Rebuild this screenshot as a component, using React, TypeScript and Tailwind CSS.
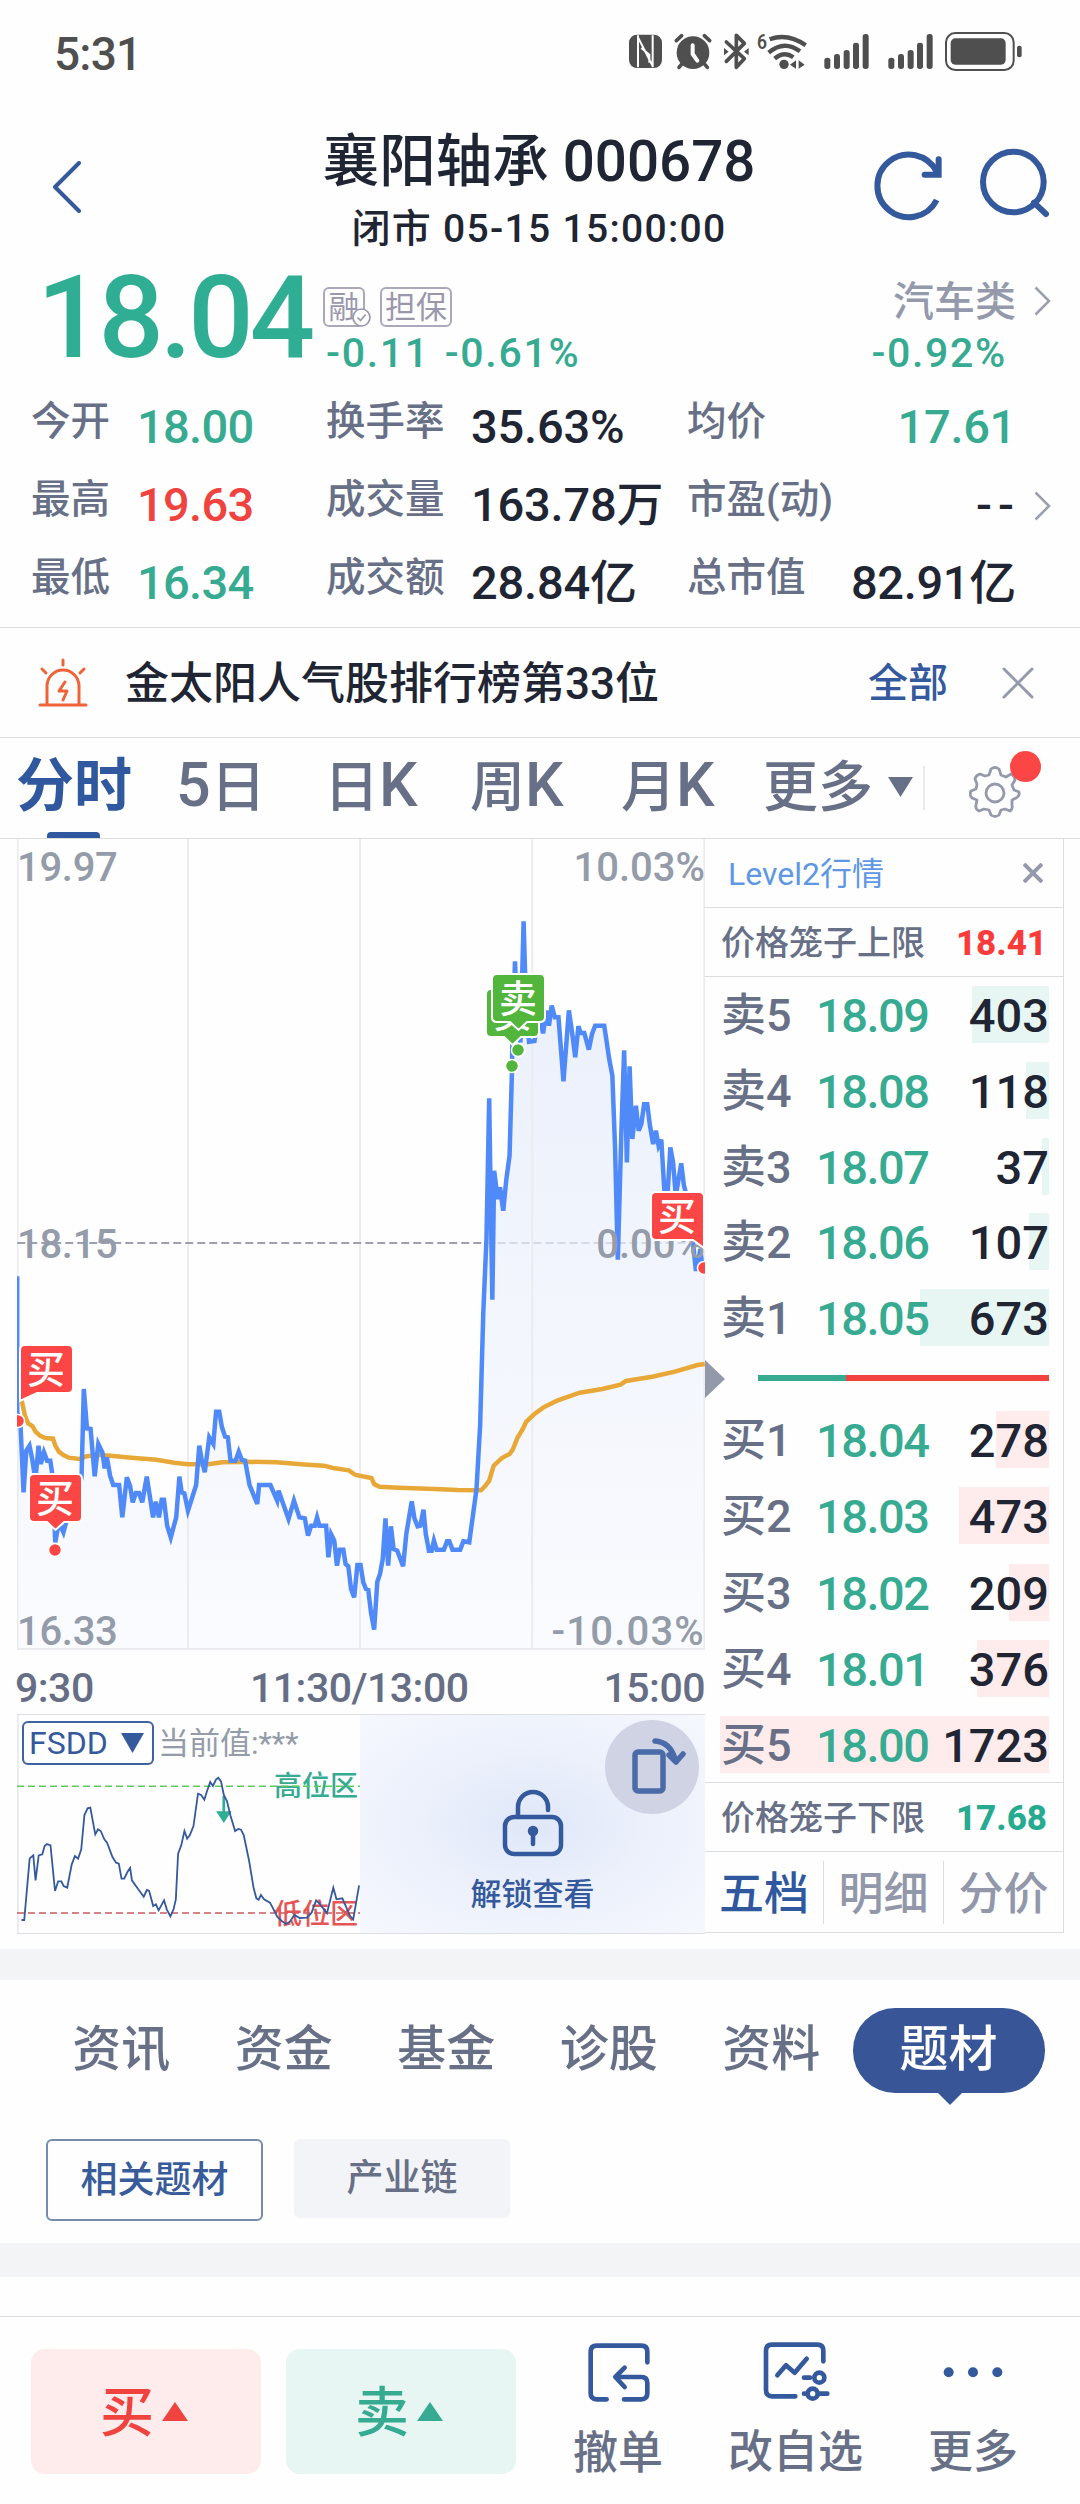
import { ReactNode } from 'react';
import clsx from 'clsx';

interface Level {
  label: string;
  price: string;
  volume: string;
  bar: number;
}

interface MarkerProps {
  kind: 'buy' | 'sell';
  x: number;
  y: number;
  tip: string;
}

const SELLS: Level[] = [
  { label: '卖5', price: '18.09', volume: '403', bar: 77 },
  { label: '卖4', price: '18.08', volume: '118', bar: 23 },
  { label: '卖3', price: '18.07', volume: '37', bar: 7 },
  { label: '卖2', price: '18.06', volume: '107', bar: 20 },
  { label: '卖1', price: '18.05', volume: '673', bar: 129 },
];

const BUYS: Level[] = [
  { label: '买1', price: '18.04', volume: '278', bar: 53 },
  { label: '买2', price: '18.03', volume: '473', bar: 90 },
  { label: '买3', price: '18.02', volume: '209', bar: 40 },
  { label: '买4', price: '18.01', volume: '376', bar: 72 },
  { label: '买5', price: '18.00', volume: '1723', bar: 329 },
];

const STATS = [
  [
    { label: '今开', value: '18.00', color: 'text-[#36ab92]' },
    { label: '换手率', value: '35.63%', color: 'text-[#1f2533]' },
    { label: '均价', value: '17.61', color: 'text-[#36ab92]' },
  ],
  [
    { label: '最高', value: '19.63', color: 'text-[#f04340]' },
    { label: '成交量', value: '163.78万', color: 'text-[#1f2533]' },
    { label: '市盈(动)', value: '--', color: 'text-[#1f2533] -mr-1 tracking-[6px]' },
  ],
  [
    { label: '最低', value: '16.34', color: 'text-[#36ab92]' },
    { label: '成交额', value: '28.84亿', color: 'text-[#1f2533]' },
    { label: '总市值', value: '82.91亿', color: 'text-[#1f2533]' },
  ],
];

const SECTIONS = ['资讯', '资金', '基金', '诊股', '资料'];

// Intraday series in chart units (1519 x 2430, origin 37.5 / 30)
const PRICE_LINE =
  '38,1342 38,1750 45,1780 52,1990 58,1865 65,1850 71,1890 75,1925 80,1925 85,1850 90,1905 97,1870 104,1895 111,1895 116,1940 122,2140 130,2080 140,2110 150,2060 165,2040 180,1945 185,1680 192,1798 200,1800 209,1942 217,1845 226,1870 231,1918 236,1885 243,1940 250,1968 263,1968 270,2065 280,1945 287,1970 293,2020 300,1992 307,1992 314,2020 324,1943 338,2065 344,2018 351,2065 357,2012 362,2012 369,2090 377,2125 389,2065 396,1943 401,1990 407,1993 415,2045 433,1968 440,1850 445,1890 452,1930 462,1825 471,1845 477,1748 484,1748 490,1795 497,1823 503,1825 509,1895 520,1895 527,1868 534,1893 541,1895 551,1968 568,2025 572,1968 597,1968 612,2015 615,1985 637,2070 649,2015 661,2065 673,2068 680,2120 687,2090 695,2090 700,2065 705,2090 720,2090 725,2185 731,2116 738,2135 744,2210 750,2162 758,2162 763,2205 769,2212 775,2280 782,2305 789,2208 796,2208 802,2260 808,2280 813,2282 819,2350 826,2402 833,2258 839,2235 845,2190 851,2068 857,2210 863,2092 869,2160 877,2165 890,2212 897,2115 909,2017 915,2068 922,2092 928,2090 935,2042 940,2115 947,2165 953,2165 958,2135 964,2162 980,2162 987,2137 992,2137 999,2162 1016,2162 1023,2137 1036,2140 1042,2080 1052,1980 1060,1790 1067,1450 1074,1230 1080,808 1083,1080 1087,1412 1091,1025 1099,1110 1104,1075 1111,1145 1118,1050 1125,980 1130,740 1131,650 1137,397 1143,600 1149,640 1156,277 1162,560 1168,638 1180,636 1190,560 1199,613 1206,545 1212,590 1218,530 1225,565 1233,565 1244,757 1256,544 1264,620 1270,685 1277,592 1282,612 1290,612 1300,662 1307,615 1314,590 1334,590 1339,635 1345,690 1352,740 1358,960 1364,1292 1372,900 1378,664 1384,1000 1390,712 1396,930 1404,830 1410,905 1416,885 1422,826 1429,826 1435,890 1442,945 1448,905 1454,950 1460,932 1467,1090 1474,1090 1480,955 1486,1000 1492,1100 1504,1003 1510,1070 1520,1120 1530,1240 1536,1320 1540,1320 1546,1260 1551,1317';

const AVERAGE_LINE =
  '40,1680 48,1715 55,1760 62,1783 72,1792 78,1807 88,1820 100,1827 117,1829 122,1850 130,1868 140,1878 152,1886 175,1890 190,1882 215,1877 250,1881 290,1886 345,1892 385,1901 415,1906 460,1906 490,1900 540,1898 610,1900 680,1907 715,1910 735,1917 770,1924 785,1938 820,1947 826,1965 838,1973 880,1976 960,1980 1010,1983 1062,1984 1072,1970 1080,1955 1090,1910 1108,1887 1125,1875 1132,1862 1143,1825 1153,1803 1162,1778 1180,1755 1200,1735 1230,1715 1280,1691 1330,1680 1370,1667 1382,1656 1440,1643 1490,1628 1540,1608 1556,1605';

const FSDD_LINE =
  '47,687 53,687 65,502 73,493 78,568 85,493 93,490 98,465 103,459 111,463 121,600 128,571 135,571 140,585 148,590 158,520 165,495 172,503 179,475 186,372 193,352 199,350 210,430 216,415 222,420 230,445 236,455 248,498 256,515 262,518 268,563 274,563 281,543 287,531 291,568 305,595 317,617 324,597 329,600 338,645 344,640 350,658 362,628 368,655 376,676 383,655 388,625 393,488 400,463 407,420 413,443 419,432 427,405 437,308 444,312 451,326 457,300 464,273 470,285 477,265 482,260 488,272 494,312 501,330 509,375 519,420 526,414 532,416 538,432 550,510 560,592 566,622 571,626 576,612 583,625 596,635 602,650 612,677 622,690 632,699 640,692 650,672 662,681 678,680 688,665 698,628 705,637 722,667 736,590 743,625 756,622 765,650 773,675 780,685 793,583';

function StatusBar() {
  return (
    <div className="flex h-[104px] items-start justify-between pl-[54px] pr-[50px] text-[#4f4f4f]">
      <span className="pt-[31px] text-[46px] leading-none tracking-[-0.8px]">5:31</span>
      <svg className="mt-[30px] h-[43px] w-[410px]" viewBox="0 30 1230 129" fill="#4f4f4f">
        {/* NFC */}
        <rect x="27" y="44" width="99" height="100" rx="24" />
        <path d="M54 46v96M54 52l44 86M98 46v96M64 84l24 20v24" fill="none" stroke="#fff" strokeWidth="6" />
        {/* Alarm */}
        <circle cx="219" cy="98" r="49" />
        <path d="M169 62l16-15M269 62l-16-15M187 130l-10 12M252 130l10 12" stroke="#4f4f4f" strokeWidth="11" strokeLinecap="round" />
        <path d="M218 76v26l14 20" fill="none" stroke="#fff" strokeWidth="12" strokeLinecap="round" />
        {/* Bluetooth */}
        <path d="M319 66l54 50-24 26V46l24 24-54 54" fill="none" stroke="#4f4f4f" strokeWidth="11" strokeLinejoin="round" strokeLinecap="round" />
        <path d="M312 84v22l14-11zM386 84v22l-14-11z" />
        {/* Wi-Fi 6 */}
        <text x="411" y="86" fontSize="62" fontWeight="600" textLength="30" lengthAdjust="spacingAndGlyphs">6</text>
        <g fill="none" stroke="#4f4f4f" strokeWidth="13">
          <path d="M449 58q54-20 108 18" />
          <path d="M446 98q46-40 94-4" />
          <path d="M464 116q28-24 56-4" />
        </g>
        <circle cx="492" cy="133" r="14" />
        <path d="M528 121v25l-18-12zM536 121v25l18-12z" />
        {/* Signals */}
        {[613, 805].map((x) => (
          <g key={x}>
            <rect x={x} y="113" width="18" height="34" rx="8" />
            <rect x={x + 29} y="102" width="18" height="45" rx="8" />
            <rect x={x + 58} y="90" width="18" height="57" rx="8" />
            <rect x={x + 86} y="68" width="18" height="79" rx="8" />
            <rect x={x + 115} y="42" width="18" height="105" rx="8" />
          </g>
        ))}
        {/* Battery */}
        <rect x="978" y="39" width="203" height="111" rx="28" fill="none" stroke="#4f4f4f" strokeWidth="6" />
        <rect x="992" y="55" width="165" height="79" rx="14" />
        <rect x="1191" y="77" width="14" height="35" rx="6" />
      </svg>
    </div>
  );
}

function Header() {
  return (
    <header className="flex h-[156px] items-start justify-between pl-[53px] pr-[30px]">
      <svg className="mt-[57px] h-[52px] w-7" viewBox="0 0 28 52" fill="none" stroke="#34599d" strokeWidth="4" strokeLinecap="round" strokeLinejoin="round">
        <path d="M26 2L2 26l24 24" />
      </svg>
      <div className="ml-[127px] flex flex-col items-center text-[#1f2533]">
        <h1 className="mt-[30px] whitespace-pre text-[56.500px] leading-none">襄阳轴承 000678</h1>
        <p className="mt-[19px] text-[39px] leading-none tracking-[1.3px]">闭市 05-15 15:00:00</p>
      </div>
      <svg className="mt-[42px] h-[80px] w-[180px]" viewBox="750 378 540 240" fill="none" stroke="#34599d" strokeWidth="18">
        <path d="M950 540A94 94 0 1 1 950 455" />
        <path d="M956 418v46h-42" strokeLinecap="round" />
        <circle cx="1180" cy="486" r="91" />
        <path d="M1242 548l36 34" strokeLinecap="round" />
      </svg>
    </header>
  );
}

function Chevron({ className }: { className?: string }) {
  return (
    <svg className={clsx('h-[30px] w-[17px]', className)} viewBox="0 0 17 30" fill="none" stroke="#9a9fae" strokeWidth="2.5">
      <path d="M1.5 1.5L15 15 1.5 28.5" />
    </svg>
  );
}

function Quote() {
  return (
    <section className="h-[367px] text-[#36ab92]">
      <div className="flex h-[123px] items-start pl-[37px] pr-[29px]">
        <span className="w-[286px] text-[115px] leading-none tracking-[-3.8px] text-[#2fae94]">18.04</span>
        <div className="pt-[27px]">
          <div className="flex gap-[15px] text-[31px] font-normal text-[#9a97ad]">
            <span className="relative flex h-10 w-[42px] items-center justify-center rounded-md border-2 border-[#aaa8ba] leading-none">
              融
              <svg className="absolute -bottom-0.5 -right-2 size-[19px]" viewBox="0 0 19 19" fill="#fff" stroke="#9a97ad" strokeWidth="1.7">
                <circle cx="9.5" cy="9.5" r="8.5" />
                <path d="M5.500 9.500l3 3 5-6" fill="none" />
              </svg>
            </span>
            <span className="flex h-10 w-[72px] items-center justify-center rounded-md border-2 border-[#aaa8ba] leading-none">担保</span>
          </div>
          <div className="ml-[3px] mt-1.5 flex gap-[15px] text-[41px] leading-none tracking-[1.7px]">
            <span>-0.11</span>
            <span>-0.61%</span>
          </div>
        </div>
        <div className="ml-auto flex flex-col items-end pt-[22px]">
          <div className="flex items-center gap-[18px] text-[41px] leading-none text-[#949aab]">
            汽车类
            <Chevron className="-mt-1" />
          </div>
          <span className="mr-[44px] mt-[10px] text-[41px] leading-none tracking-[1.7px]">-0.92%</span>
        </div>
      </div>
      {STATS.map(([a, b, c], row) => (
        <div key={a.label} className="flex h-[78px] items-center pl-[31px] pr-[29px] text-[39.500px] leading-none text-[#677086]">
          <span className="w-[106px]">{a.label}</span>
          <span className={clsx('w-[189px] pt-2 text-[47px] tracking-[-0.7px]', a.color)}>{a.value}</span>
          <span className="w-[145px]">{b.label}</span>
          <span className={clsx('w-[216px] whitespace-nowrap pt-2 text-[47px] tracking-[-0.2px]', b.color)}>{b.value}</span>
          <span>{c.label}</span>
          <span className={clsx('ml-auto pt-2 text-[47px]', c.color, c.value !== '--' && 'tracking-[-0.3px]')}>{c.value}</span>
          <span className="ml-[18px] w-[17px] pt-3">{row === 1 && <Chevron />}</span>
        </div>
      ))}
    </section>
  );
}

function Notice() {
  return (
    <section className="flex h-[111px] items-center border-y border-[#dcdddf] pl-[38px] pr-[46px]">
      <svg className="h-[50px] w-[50px]" viewBox="0 0 50 50" fill="none" stroke="#f06238" strokeWidth="3" strokeLinecap="round" strokeLinejoin="round">
        <path d="M2 47h46M9 46V28a16 16 0 0 1 32 0v18M25 2v5M4 11l4 4M46 11l-4 4" />
        <path d="M27 24l-6 9h8l-4 9" />
      </svg>
      <span className="ml-[37px] pt-[3px] text-[44px] leading-none text-[#1f2533]">金太阳人气股排行榜第33位</span>
      <span className="ml-auto pt-[3px] text-[40px] leading-none text-[#34599d]">全部</span>
      <svg className="ml-[54px] size-8" viewBox="0 0 32 32" stroke="#949aab" strokeWidth="3" strokeLinecap="round">
        <path d="M2 2l28 28M30 2L2 30" />
      </svg>
    </section>
  );
}

function PeriodTabs() {
  return (
    <nav className="flex h-[101px] items-start border-b border-[#dcdddf] pl-4 text-[55px] leading-none text-[#677086]">
      <div className="flex h-full w-[160px] flex-col justify-between pt-[19px] text-[58px] font-bold text-[#2f589e]">
        分时
        <span className="ml-[31px] h-1.5 w-[53px] rounded-t bg-[#2f589e]" />
      </div>
      <span className="w-[148px] pt-[17px]">
        <span className="text-[61px]">5</span>日
      </span>
      <span className="w-[146px] pt-[17px]">
        日<span className="text-[61px]">K</span>
      </span>
      <span className="w-[151px] pt-[17px]">
        周<span className="text-[61px]">K</span>
      </span>
      <span className="w-[142px] pt-[17px]">
        月<span className="text-[61px]">K</span>
      </span>
      <span className="w-[125px] pt-[22px]">更多</span>
      <svg className="mt-[39px] h-5 w-[25px]" viewBox="0 0 25 20" fill="#677086">
        <path d="M0 0h25L12.500 20z" />
      </svg>
      <span className="ml-[10px] mt-7 h-[44px] w-0.5 bg-[#e8e9eb]" />
      <div className="relative ml-11 mt-7">
        <svg className="h-[52px] w-[52px]" viewBox="0 0 52 52" fill="none" stroke="#949aab" strokeWidth="2.8" strokeLinejoin="round">
          <path d="M22 3Q26 0 30 3L32 9L37 11L42 8Q46 10 46 14L43 19L45 24L50 26Q51 30 47 32L43 34L43 39Q44 43 41 45L36 43L32 44L30 49Q26 52 22 49L20 44L15 43L10 45Q6 43 7 39L8 34L3 32Q0 29 2 25L7 23L8 18L6 13Q7 9 11 8L16 10L20 9Z" />
          <circle cx="26" cy="27" r="9" />
        </svg>
        <span className="absolute -top-[15px] left-[41px] size-[31px] rounded-full bg-[#fc4645]" />
      </div>
    </nav>
  );
}

// Flag pinned on the price line; x / y is the top left corner of its box
function Marker({ kind, x, y, tip }: MarkerProps) {
  return (
    <g transform={`translate(${x} ${y})`}>
      <path
        d={`M5 0H48Q53 0 53 5V${tip === 'right' ? '56L42 48' : '43Q53 48 48 48'}${tip === 'center' ? 'H35L26.500 56L18 48' : ''}H${tip === 'left' ? '17L0 56V43' : '5Q0 48 0 43'}V5Q0 0 5 0Z`}
        fill={kind === 'buy' ? '#fc4645' : '#52b53c'}
        stroke="#fff"
        strokeWidth="2"
      />
      <text x="26" y="38" fontSize="38" fill="#fff" textAnchor="middle">
        {kind === 'buy' ? '买' : '卖'}
      </text>
    </g>
  );
}

function PriceChart() {
  return (
    <div className="relative h-[811px] text-[40px] leading-none text-[#949ba9]">
      <svg className="block h-full w-full" viewBox="37.500 30 1519 2433" preserveAspectRatio="none" fill="none">
        <defs>
          <linearGradient id="area" x1="0" y1="0" x2="0" y2="1">
            <stop offset="0" stopColor="#e9effb" />
            <stop offset="1" stopColor="#fafbfe" />
          </linearGradient>
        </defs>
        <polygon points={`${PRICE_LINE} 1556,1317 1556,2460 38,2460`} fill="url(#area)" />
        <g stroke="#ebecef" strokeWidth="2">
          <path d="M39 30V2460H1555V30M415 30V2460M795 30V2460M1175 30V2460" vectorEffect="non-scaling-stroke" />
        </g>
        <path d="M38 1242H1072" stroke="#9ba1ae" strokeWidth="2" strokeDasharray="8 4" vectorEffect="non-scaling-stroke" />
        <path d="M1072 1242H1555" stroke="#d3d9e6" strokeWidth="2" strokeDasharray="8 4" vectorEffect="non-scaling-stroke" />
        <polyline points={AVERAGE_LINE} stroke="#e8a838" strokeWidth="4.500" vectorEffect="non-scaling-stroke" />
        <polyline points={PRICE_LINE} stroke="#4f8af8" strokeWidth="4.500" vectorEffect="non-scaling-stroke" />
      </svg>
      <span className="absolute left-0 top-[9px] tracking-[-0.3px]">19.97</span>
      <span className="absolute right-0 top-[9px]">10.03%</span>
      <span className="absolute left-0 top-[386px] tracking-[-0.3px]">18.15</span>
      <span className="absolute right-0 top-[386px]">0.00%</span>
      <span className="absolute -bottom-0.5 left-0 tracking-[-0.3px]">16.33</span>
      <span className="absolute -bottom-0.5 right-0 tracking-[1.2px]">-10.03%</span>
      <svg className="absolute inset-0 h-full w-full" viewBox="17 840 688 811">
        <Marker kind="sell" x={486} y={990} tip="center" />
        <Marker kind="sell" x={492} y={975} tip="center" />
        <Marker kind="buy" x={20} y={1346} tip="left" />
        <Marker kind="buy" x={29} y={1475} tip="center" />
        <Marker kind="buy" x={651} y={1193} tip="right" />
        <g stroke="#fff" strokeWidth="1.500">
          <circle cx="518" cy="1051" r="6.500" fill="#52b53c" />
          <circle cx="512" cy="1067" r="6.500" fill="#52b53c" />
          <circle cx="18" cy="1422" r="6.500" fill="#fc4645" />
          <circle cx="55" cy="1551" r="6.500" fill="#fc4645" />
          <circle cx="704" cy="1269" r="6.500" fill="#fc4645" />
        </g>
      </svg>
    </div>
  );
}

function FsddPanel() {
  return (
    <div className="flex h-[220px] border-y border-[#dcdee2]">
      <div className="relative w-[343px] border-l-2 border-[#ebecef]">
        <div className="flex items-center pl-[3px] pt-[6px]">
          <span className="flex h-11 w-[132px] items-center justify-between rounded-md border-2 border-[#3f62a3] pl-[5px] pr-2 text-[32px] font-normal leading-none text-[#34599d]">
            FSDD
            <svg className="h-5 w-[23px]" viewBox="0 0 23 20" fill="#34599d">
              <path d="M0 0h23L11.500 20z" />
            </svg>
          </span>
          <span className="ml-1 text-[31px] font-normal leading-none text-[#949ba9]">当前值:***</span>
        </div>
        <span className="absolute right-0.5 top-[58px] text-[28px] leading-none text-[#36ab92]">高位区</span>
        <span className="absolute right-0.5 top-[186px] text-[28px] leading-none text-[#e45656]">低位区</span>
        <svg className="absolute -left-0.5 top-0.5 h-[216px] w-[343px]" viewBox="37 78 758 648" preserveAspectRatio="none" fill="none">
          <path d="M37 286H795" stroke="#5ccb5c" strokeWidth="1.500" strokeDasharray="7 4" vectorEffect="non-scaling-stroke" />
          <path d="M37 666H795" stroke="#cb5a62" strokeWidth="1.500" strokeDasharray="7 4" vectorEffect="non-scaling-stroke" />
          <path d="M491 315h6v46h14l-17 35-17-35h14z" fill="#2fae94" />
          <polyline points={FSDD_LINE} stroke="#34599d" strokeWidth="1.800" vectorEffect="non-scaling-stroke" />
        </svg>
      </div>
      <div className="relative flex flex-1 flex-col items-center bg-[radial-gradient(ellipse_at_center,#dfe7f8_0%,#ebf0fb_45%,#f6f8fe_100%)] pt-[74px]">
        <svg className="h-[68px] w-[62px]" viewBox="0 0 62 68" fill="none" stroke="#34599d" strokeWidth="4.500" strokeLinecap="round">
          <rect x="3" y="28" width="56" height="37" rx="9" />
          <path d="M16 27V18a15 15 0 0 1 30 0v3M31 45v10" />
          <circle cx="31" cy="42" r="3" fill="#34599d" />
        </svg>
        <span className="mt-[22px] text-[31px] leading-none text-[#34599d]">解锁查看</span>
        <div className="absolute right-1.5 top-[5px] flex size-[94px] items-center justify-center rounded-full bg-[#d0d3e3]">
          <svg className="ml-2 h-[60px] w-[66px]" viewBox="0 0 66 60" fill="none" stroke="#4a6ba8" strokeWidth="5.500" strokeLinecap="round" strokeLinejoin="round">
            <rect x="12" y="15" width="28" height="39" rx="3" />
            <path d="M32 4Q47 5 52 22M46 18l7 7 7-8" />
          </svg>
        </div>
      </div>
    </div>
  );
}

function LevelRow({ level, tint }: { level: Level; tint: string }) {
  return (
    <div className="relative flex h-[57px] items-center pl-[5px] pr-[14px] text-[47px] leading-none">
      <span className={clsx('absolute inset-y-0 right-[14px]', tint)} style={{ width: level.bar }} />
      <span className="relative w-[95px] pl-[11px] pt-0.5 text-[45px] text-[#677086]">{level.label}</span>
      <span className="relative pl-[11px] pt-0.5 tracking-[-1.5px] text-[#36ab92]">{level.price}</span>
      <span className="relative ml-auto pt-0.5 text-[#1f2533]">{level.volume}</span>
    </div>
  );
}

function CageRow({ label, value, className }: { label: string; value: string; className: string }) {
  return (
    <div className="flex h-[69px] items-center justify-between border-b border-[#dcdddf] pl-4 pr-4 leading-none">
      <span className="pt-0.5 text-[34px] text-[#677086]">{label}</span>
      <span className={clsx('pt-0.5 text-[35px] font-extrabold', className)}>{value}</span>
    </div>
  );
}

function OrderBook() {
  return (
    <aside className="relative h-[1094px] w-[359px] border-b border-r border-[#dcdddf]">
      <div className="flex h-[69px] items-center justify-between border-b border-[#dcdddf] pl-[23px] pr-5">
        <span className="pt-0.5 text-[32px] font-normal leading-none text-[#5e98e4]">Level2行情</span>
        <svg className="size-5" viewBox="0 0 20 20" stroke="#949aab" strokeWidth="4">
          <path d="M1 1l18 18M19 1L1 19" />
        </svg>
      </div>
      <CageRow label="价格笼子上限" value="18.41" className="text-[#fb3b3a]" />
      <div className="flex h-[369px] flex-col justify-between pt-[9px]">
        {SELLS.map((level) => (
          <LevelRow key={level.label} level={level} tint="bg-[#e7f6f3]" />
        ))}
      </div>
      <div className="mb-[30px] ml-[53px] mt-[29px] flex h-1.5 w-[291px]">
        <span className="w-[88px] bg-[#36ab92]" />
        <span className="flex-1 bg-[#f04340]" />
      </div>
      <div className="flex h-[372px] flex-col justify-between border-b border-[#dcdddf] pb-[9px]">
        {BUYS.map((level) => (
          <LevelRow key={level.label} level={level} tint="bg-[#feebeb]" />
        ))}
      </div>
      <CageRow label="价格笼子下限" value="17.68" className="text-[#27ab90]" />
      <div className="flex h-[80px] items-center text-[45px] leading-none text-[#9297aa]">
        <span className="flex-1 pl-[14px] pt-1 text-[#2f589e]">五档</span>
        <span className="h-[63px] w-px bg-[#dcdddf]" />
        <span className="w-[119px] pt-1 text-center">明细</span>
        <span className="h-[63px] w-px bg-[#dcdddf]" />
        <span className="w-[119px] pt-1 text-center">分价</span>
      </div>
      <svg className="absolute left-0 top-[521px] h-[38px] w-5" viewBox="0 0 20 38" fill="#9499aa">
        <path d="M0 0l20 19L0 38z" />
      </svg>
    </aside>
  );
}

function Sections() {
  return (
    <section className="h-[263px]">
      <div className="flex pl-[40px] pt-7 text-[49px] leading-none text-[#677086]">
        {SECTIONS.map((name) => (
          <span key={name} className="w-[162.500px] pt-[17px] text-center">{name}</span>
        ))}
        <div className="relative flex h-[85px] w-[192px] justify-center rounded-[42px] bg-[#385598] pt-[17px] text-white">
          题材
          <svg className="absolute left-[84px] top-[84px] h-[13px] w-[26px]" viewBox="0 0 26 13" fill="#385598">
            <path d="M0 0h26L13 13z" />
          </svg>
        </div>
      </div>
      <div className="mt-[46px] flex items-start pl-[46px] text-[37px] leading-none">
        <span className="flex h-[82px] w-[217px] items-center justify-center rounded-md border-2 border-[#768cae] text-[#385c99]">相关题材</span>
        <span className="ml-[31px] flex h-[79px] w-[216px] items-center justify-center rounded-md bg-[#f3f4f7] text-[#677086]">产业链</span>
      </div>
    </section>
  );
}

function TradeButton({ label, className }: { label: string; className: string }) {
  return (
    <button className={clsx('flex h-[125px] w-[230px] items-center justify-center gap-2 rounded-[14px] pr-1 text-[54px] leading-none', className)}>
      <span className="pt-1">{label}</span>
      <svg className="h-[19px] w-[26px]" viewBox="0 0 26 19" fill="currentColor">
        <path d="M13 0l13 19H0z" />
      </svg>
    </button>
  );
}

function BarItem({ label, children, className }: { label: string; children: ReactNode; className: string }) {
  return (
    <div className={clsx('flex flex-col items-center text-[45px] leading-none text-[#677086]', className)}>
      <svg className="h-[66px] w-[72px]" viewBox="0 0 216 198" fill="none" stroke="#34599d" strokeWidth="14" strokeLinecap="round" strokeLinejoin="round">
        {children}
      </svg>
      <span className="mt-6">{label}</span>
    </div>
  );
}

function BottomBar() {
  return (
    <footer className="flex h-[188px] border-t border-[#dcdddf] pl-[31px]">
      <TradeButton label="买" className="mt-8 bg-[#feecec] text-[#f04340]" />
      <TradeButton label="卖" className="ml-[25px] mt-8 bg-[#e8f6f3] text-[#36ab92]" />
      <BarItem label="撤单" className="ml-[57px] mt-6">
        <path d="M196 64V32Q196 14 178 14H44Q26 14 26 32V156Q26 175 44 175H74M126 175H178Q196 175 196 156V126Q196 108 178 108H100M128 80L100 108L128 138" />
      </BarItem>
      <BarItem label="改自选" className="ml-[65px] mt-[23px]">
        <path d="M190 64V32Q190 14 172 14H36Q18 14 18 32V150Q18 169 36 169H106" />
        <path d="M52 106L78 76L104 98L140 56" />
        <path d="M132 113H150M132 161H136M180 161H202" />
        <circle cx="178" cy="113" r="15" />
        <circle cx="158" cy="161" r="15" />
      </BarItem>
      <BarItem label="更多" className="ml-[65px] mt-[23px]">
        <g fill="#34599d" stroke="none">
          <circle cx="35" cy="97" r="15" />
          <circle cx="108" cy="97" r="15" />
          <circle cx="181" cy="97" r="15" />
        </g>
      </BarItem>
    </footer>
  );
}

export default function App() {
  return (
    <main className="h-[2504px] w-[1080px] overflow-hidden bg-[#fefefe] font-['Roboto','Noto_Sans_CJK_SC',sans-serif] font-medium">
      <StatusBar />
      <Header />
      <Quote />
      <Notice />
      <PeriodTabs />
      <div className="flex h-[1110px] pl-[17px]">
        <div className="w-[688px]">
          <PriceChart />
          <div className="relative flex h-[64px] items-center justify-between pt-3 text-[41px] leading-none tracking-[-0.5px] text-[#666e85]">
            <span className="-ml-0.5">9:30</span>
            <span className="absolute left-[233px]">11:30/13:00</span>
            <span>15:00</span>
          </div>
          <FsddPanel />
        </div>
        <OrderBook />
      </div>
      <div className="h-[31px] bg-[#f3f4f6]" />
      <Sections />
      <div className="h-[34px] bg-[#f3f4f6]" />
      <div className="h-[39px]" />
      <BottomBar />
    </main>
  );
}
